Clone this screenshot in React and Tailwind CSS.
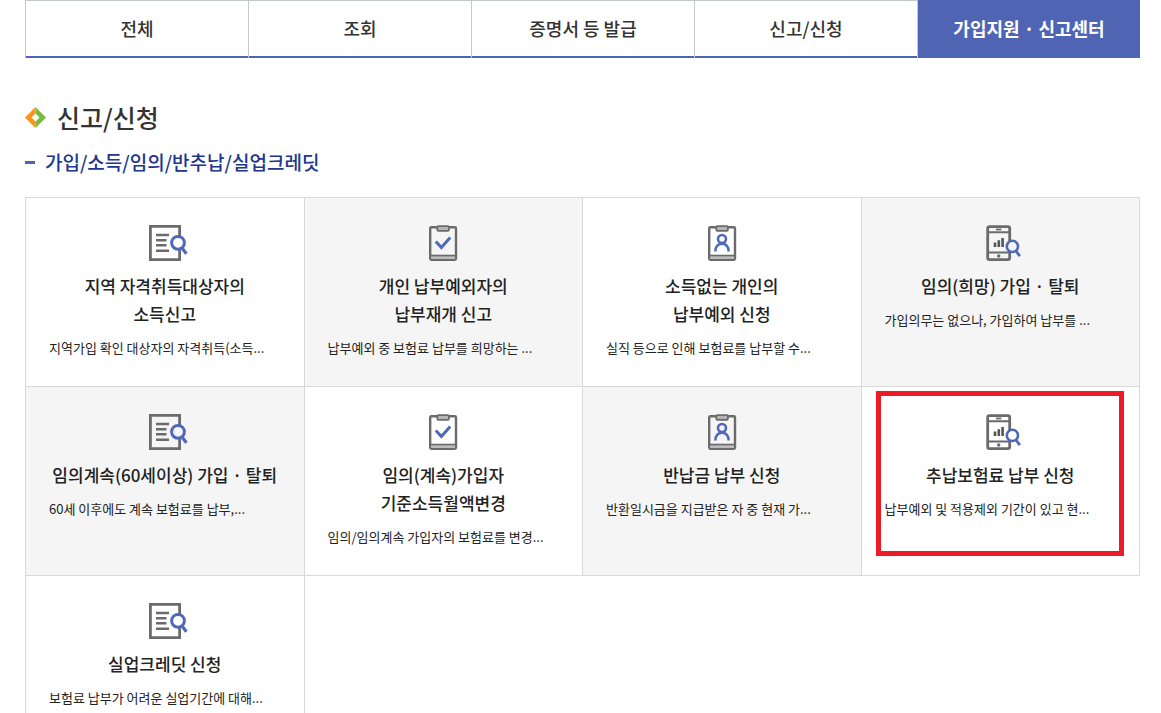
const tabs = [
  { label: '전체' },
  { label: '조회' },
  { label: '증명서 등 발급' },
  { label: '신고/신청' },
  { label: '가입지원 · 신고센터', active: true },
];

const services = [
  { icon: 'document', title: ['지역 자격취득대상자의', '소득신고'], text: '지역가입 확인 대상자의 자격취득(소득...' },
  { icon: 'check', title: ['개인 납부예외자의', '납부재개 신고'], text: '납부예외 중 보험료 납부를 희망하는 ...', shaded: true },
  { icon: 'person', title: ['소득없는 개인의', '납부예외 신청'], text: '실직 등으로 인해 보험료를 납부할 수...' },
  { icon: 'phone', title: ['임의(희망) 가입 · 탈퇴'], text: '가입의무는 없으나, 가입하여 납부를 ...', shaded: true },
  { icon: 'document', title: ['임의계속(60세이상) 가입 · 탈퇴'], text: '60세 이후에도 계속 보험료를 납부,...', shaded: true },
  { icon: 'check', title: ['임의(계속)가입자', '기준소득월액변경'], text: '임의/임의계속 가입자의 보험료를 변경...' },
  { icon: 'person', title: ['반납금 납부 신청'], text: '반환일시금을 지급받은 자 중 현재 가...', shaded: true },
  { icon: 'phone', title: ['추납보험료 납부 신청'], text: '납부예외 및 적용제외 기간이 있고 현...', highlighted: true },
  { icon: 'document', title: ['실업크레딧 신청'], text: '보험료 납부가 어려운 실업기간에 대해...' },
];

const GRAY = '#6b6b6b';
const BLUE = '#5068b8';

function Clipboard({ children }) {
  return (
    <>
      <rect x="11.2" y="2.2" width="25.8" height="32.6" rx="1.2" fill="none" stroke={GRAY} strokeWidth="2.4" />
      <rect x="12.4" y="31.4" width="23.4" height="2.6" fill="#bdbdbd" />
      <path d="M11 30.6H37" stroke={GRAY} strokeWidth="1.8" />
      <rect x="18.3" y="1.2" width="11.6" height="4.6" rx="1" fill="#b5b5b5" stroke={GRAY} strokeWidth="1.8" />
      {children}
    </>
  );
}

function ServiceIcon({ name }) {
  return (
    <svg width="48" height="36" viewBox="0 0 48 36" aria-hidden="true" className="mx-auto block">
      {name === 'document' && (
        <>
          <path d="M38.6 12V1.4H9.4V34.6H38.6V24" fill="none" stroke={GRAY} strokeWidth="2.8" />
          <path d="M15 10H28M15 15.3H25.5M15 20.3H25.5M15 25.8H28" stroke={GRAY} strokeWidth="2.4" />
          <circle cx="37" cy="17.8" r="6.4" fill="none" stroke={BLUE} strokeWidth="3" />
          <path d="M41 23L45.4 28.8" stroke={BLUE} strokeWidth="3.2" />
        </>
      )}
      {name === 'check' && (
        <Clipboard>
          <path d="M16.8 16.6L22.4 22.6L31.2 12.6" fill="none" stroke={BLUE} strokeWidth="3" />
        </Clipboard>
      )}
      {name === 'person' && (
        <Clipboard>
          <circle cx="24" cy="14" r="4" fill="none" stroke={BLUE} strokeWidth="2.6" />
          <path d="M17.4 26.4C17.4 21.8 19.8 18.6 24 18.6S30.6 21.8 30.6 26.4" fill="none" stroke={BLUE} strokeWidth="2.6" />
        </Clipboard>
      )}
      {name === 'phone' && (
        <>
          <path d="M33.7 17V3.4Q33.7 1.6 31.9 1.6H13.5Q11.7 1.6 11.7 3.4V32.8Q11.7 34.6 13.5 34.6H31.9Q33.7 34.6 33.7 32.8V26" fill="none" stroke={GRAY} strokeWidth="2.8" />
          <path d="M11.7 7.2H33.7M11.7 27.4H33.7" stroke={GRAY} strokeWidth="2" />
          <path d="M20 4.5H25.4" stroke={GRAY} strokeWidth="1.8" />
          <circle cx="22.7" cy="31" r="1.7" fill={GRAY} />
          <path d="M19 22V17.6M22.8 22V15.2M26.6 22V13" stroke="#555" strokeWidth="2.6" />
          <circle cx="36.4" cy="21.4" r="5.6" fill="none" stroke={BLUE} strokeWidth="2.6" />
          <path d="M40 26L43.8 31.2" stroke={BLUE} strokeWidth="2.8" />
        </>
      )}
    </svg>
  );
}

function Tab({ label, active }) {
  const look = active
    ? 'bg-[#4f65b4] border-[#4f65b4] font-bold text-white'
    : 'bg-white border-t-[#c2c8cc] border-b-[#4f65b4] font-medium text-[#333]';
  return (
    <li className="border-l border-[#c2c8cc]">
      <a
        href="#"
        aria-current={active ? 'page' : undefined}
        className={`flex h-[58px] items-center justify-center border-t border-b-2 pb-0.5 text-lg ${look}`}
      >
        {label}
      </a>
    </li>
  );
}

function ServiceCard({ icon, title, text, shaded, highlighted }) {
  return (
    <li className={`relative border-r border-b border-[#d9d9d9] ${shaded ? 'bg-[#f5f5f5]' : 'bg-white'}`}>
      <a href="#" className="block px-[23px] pt-[27px] pb-7">
        <ServiceIcon name={icon} />
        <h4 className="mt-[11px] text-center text-[17px] leading-7 font-medium whitespace-nowrap text-[#222]">
          {title.map((line) => (
            <span key={line} className="block">
              {line}
            </span>
          ))}
        </h4>
        <p className="mt-[10px] text-[13px] leading-5 whitespace-nowrap text-[#222]">{text}</p>
      </a>
      {highlighted && (
        <span className="pointer-events-none absolute top-1 right-[15px] bottom-[19px] left-[14px] border-[5px] border-[#ed1c24]" />
      )}
    </li>
  );
}

export default function App() {
  return (
    <main className="bg-white pr-[21px] pl-[25px] font-['Noto_Sans_CJK_KR',sans-serif]">
      <nav>
        <ul className="grid grid-cols-5">
          {tabs.map((tab) => (
            <Tab key={tab.label} {...tab} />
          ))}
        </ul>
      </nav>

      <h2 className="mt-[41px] flex items-center gap-[11px] text-[25px] leading-9 font-medium text-[#333]">
        <svg width="21" height="21" viewBox="0 0 21 21" aria-hidden="true">
          <path d="M10.5 0L0 10.5L10.5 21V14.5L6.5 10.5L10.5 6.5Z" fill="#f7941e" />
          <path d="M10.5 0L21 10.5L10.5 21V14.5L14.5 10.5L10.5 6.5Z" fill="#76bd43" />
        </svg>
        신고/신청
      </h2>

      <h3 className="mt-[13px] flex items-center gap-[10px] text-[19px] leading-7 font-medium text-[#20368f]">
        <span className="h-[3px] w-[10px] bg-[#4f65b4]" />
        가입/소득/임의/반추납/실업크레딧
      </h3>

      <ul className="mt-[21px] grid auto-rows-fr grid-cols-4 border-t border-l border-[#d9d9d9]">
        {services.map((service) => (
          <ServiceCard key={service.title.join(' ')} {...service} />
        ))}
      </ul>
    </main>
  );
}
